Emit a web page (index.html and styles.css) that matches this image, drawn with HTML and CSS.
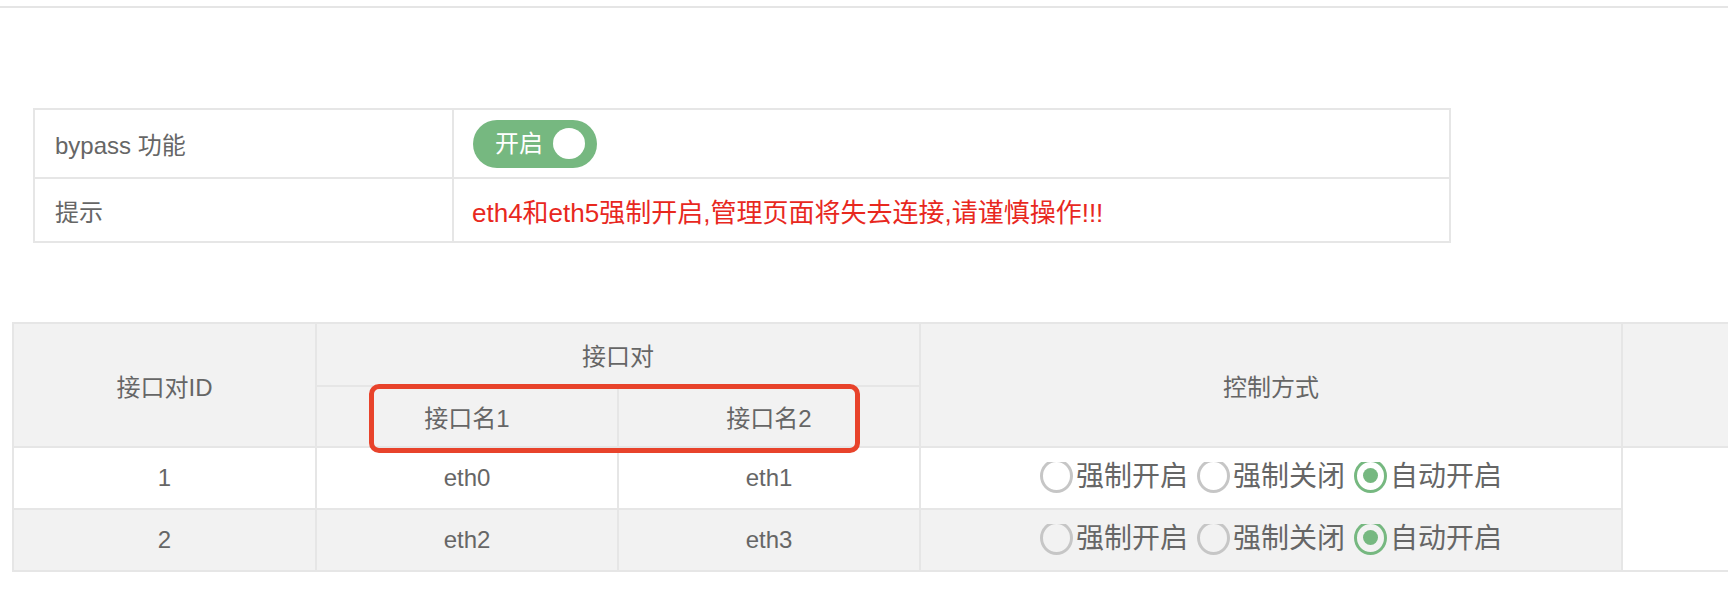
FILE: index.html
```html
<!DOCTYPE html>
<html lang="zh-CN">
<head>
<meta charset="utf-8">
<title>bypass</title>
<link rel="stylesheet" href="styles.css">
</head>
<body>
<div class="topbar"></div>
<div class="page">
  <table class="info">
    <colgroup><col class="c-label"><col class="c-value"></colgroup>
    <tr class="row-switch">
      <td>bypass 功能</td>
      <td><span class="switch"><span class="switch-text">开启</span><span class="knob"></span></span></td>
    </tr>
    <tr class="row-tip">
      <td>提示</td>
      <td class="warn">eth4和eth5强制开启,管理页面将失去连接,请谨慎操作!!!</td>
    </tr>
  </table>

  <div class="pairs-wrap">
    <table class="pairs">
      <colgroup>
        <col class="p1"><col class="p2"><col class="p3"><col class="p4"><col class="p5">
      </colgroup>
      <thead>
        <tr class="h1">
          <th rowspan="2">接口对ID</th>
          <th colspan="2">接口对</th>
          <th rowspan="2">控制方式</th>
          <th rowspan="2"></th>
        </tr>
        <tr class="h2">
          <th>接口名1</th>
          <th>接口名2</th>
        </tr>
      </thead>
      <tbody>
        <tr class="d1">
          <td>1</td>
          <td>eth0</td>
          <td>eth1</td>
          <td>
            <div class="radios">
              <span class="opt"><span class="ring"><span class="circle"></span></span><span class="lbl">强制开启</span></span>
              <span class="opt"><span class="ring"><span class="circle"></span></span><span class="lbl">强制关闭</span></span>
              <span class="opt on"><span class="ring"><span class="circle"><span class="dot"></span></span></span><span class="lbl">自动开启</span></span>
            </div>
          </td>
          <td rowspan="2" class="blank"></td>
        </tr>
        <tr class="d2">
          <td>2</td>
          <td>eth2</td>
          <td>eth3</td>
          <td>
            <div class="radios">
              <span class="opt"><span class="ring"><span class="circle"></span></span><span class="lbl">强制开启</span></span>
              <span class="opt"><span class="ring"><span class="circle"></span></span><span class="lbl">强制关闭</span></span>
              <span class="opt on"><span class="ring"><span class="circle"><span class="dot"></span></span></span><span class="lbl">自动开启</span></span>
            </div>
          </td>
        </tr>
      </tbody>
    </table>
    <div class="mark"></div>
  </div>
</div>
</body>
</html>
```

FILE: styles.css
```css
* { box-sizing: border-box; }

html, body {
  margin: 0;
  padding: 0;
  background: #ffffff;
  overflow: hidden;
}

body {
  font-family: "Liberation Sans", "Noto Sans CJK SC", sans-serif;
  color: #666666;
  font-size: 24px;
}

.topbar {
  margin-top: 6px;
  height: 2px;
  background: #e5e5e5;
}

.page {
  overflow: hidden;
}

/* ---------- info table ---------- */
.info {
  margin: 100px 0 0 33px;
  border-collapse: separate;
  border-spacing: 0;
  table-layout: fixed;
  width: 1418px;
  border-top: 2px solid #e6e6e6;
  border-left: 2px solid #e6e6e6;
}

.info .c-label { width: 419px; }
.info .c-value { width: 997px; }

.info td {
  border-right: 2px solid #e6e6e6;
  border-bottom: 2px solid #e6e6e6;
  padding: 0 0 0 20px;
  vertical-align: middle;
  white-space: nowrap;
}

.info td + td { padding-left: 19px; }

.info .row-switch td { height: 69px; }
.info .row-tip td { height: 64px; }

.info .warn {
  color: #e8281e;
  font-size: 26px;
  padding-left: 18px;
}

.switch {
  display: inline-flex;
  align-items: center;
  height: 48px;
  width: 124px;
  padding: 0 12px 0 22px;
  border-radius: 24px;
  background: #76b880;
  color: #ffffff;
  vertical-align: middle;
}

.switch-text {
  font-size: 24px;
  line-height: 1;
}

.knob {
  width: 32px;
  height: 31px;
  margin-left: auto;
  border-radius: 50%;
  background: #ffffff;
}

/* ---------- pairs table ---------- */
.pairs-wrap {
  position: relative;
  margin: 79px 0 0 12px;
  width: 1913px;
}

.pairs {
  border-collapse: separate;
  border-spacing: 0;
  table-layout: fixed;
  width: 1913px;
  border-top: 2px solid #e6e6e6;
  border-left: 2px solid #e6e6e6;
}

.pairs .p1 { width: 303px; }
.pairs .p2 { width: 302px; }
.pairs .p3 { width: 302px; }
.pairs .p4 { width: 702px; }
.pairs .p5 { width: 302px; }

.pairs th,
.pairs td {
  border-right: 2px solid #e6e6e6;
  border-bottom: 2px solid #e6e6e6;
  padding: 0;
  text-align: center;
  vertical-align: middle;
  font-weight: normal;
  white-space: nowrap;
}

.pairs th { background: #f2f2f2; }

.pairs .h1 th { height: 63px; }
.pairs .h2 th { height: 61px; }
.pairs .d1 td { height: 62px; background: #ffffff; }
.pairs .d2 td { height: 62px; background: #f2f2f2; }
.pairs td.blank { background: #ffffff; }

.radios {
  display: inline-flex;
  align-items: center;
  gap: 9px;
  vertical-align: middle;
  margin-top: -4px;
}

.opt {
  display: inline-flex;
  align-items: center;
  gap: 3px;
}

.ring {
  display: block;
  width: 33px;
  height: 31px;
  overflow: hidden;
  position: relative;
}

.circle {
  position: absolute;
  left: 0;
  bottom: 0;
  width: 33px;
  height: 34px;
  border: 3px solid #c6c6c6;
  border-radius: 50%;
  display: flex;
  align-items: center;
  justify-content: center;
}

.opt.on .circle { border-color: #76b880; }

.dot {
  width: 15px;
  height: 15px;
  border-radius: 50%;
  background: #76b880;
}

.lbl {
  font-size: 28px;
  line-height: 1;
  color: #666666;
}

/* annotation */
.mark {
  position: absolute;
  left: 357px;
  top: 62px;
  width: 491px;
  height: 69px;
  border: 5px solid #e8432b;
  border-radius: 10px;
  pointer-events: none;
}
```
